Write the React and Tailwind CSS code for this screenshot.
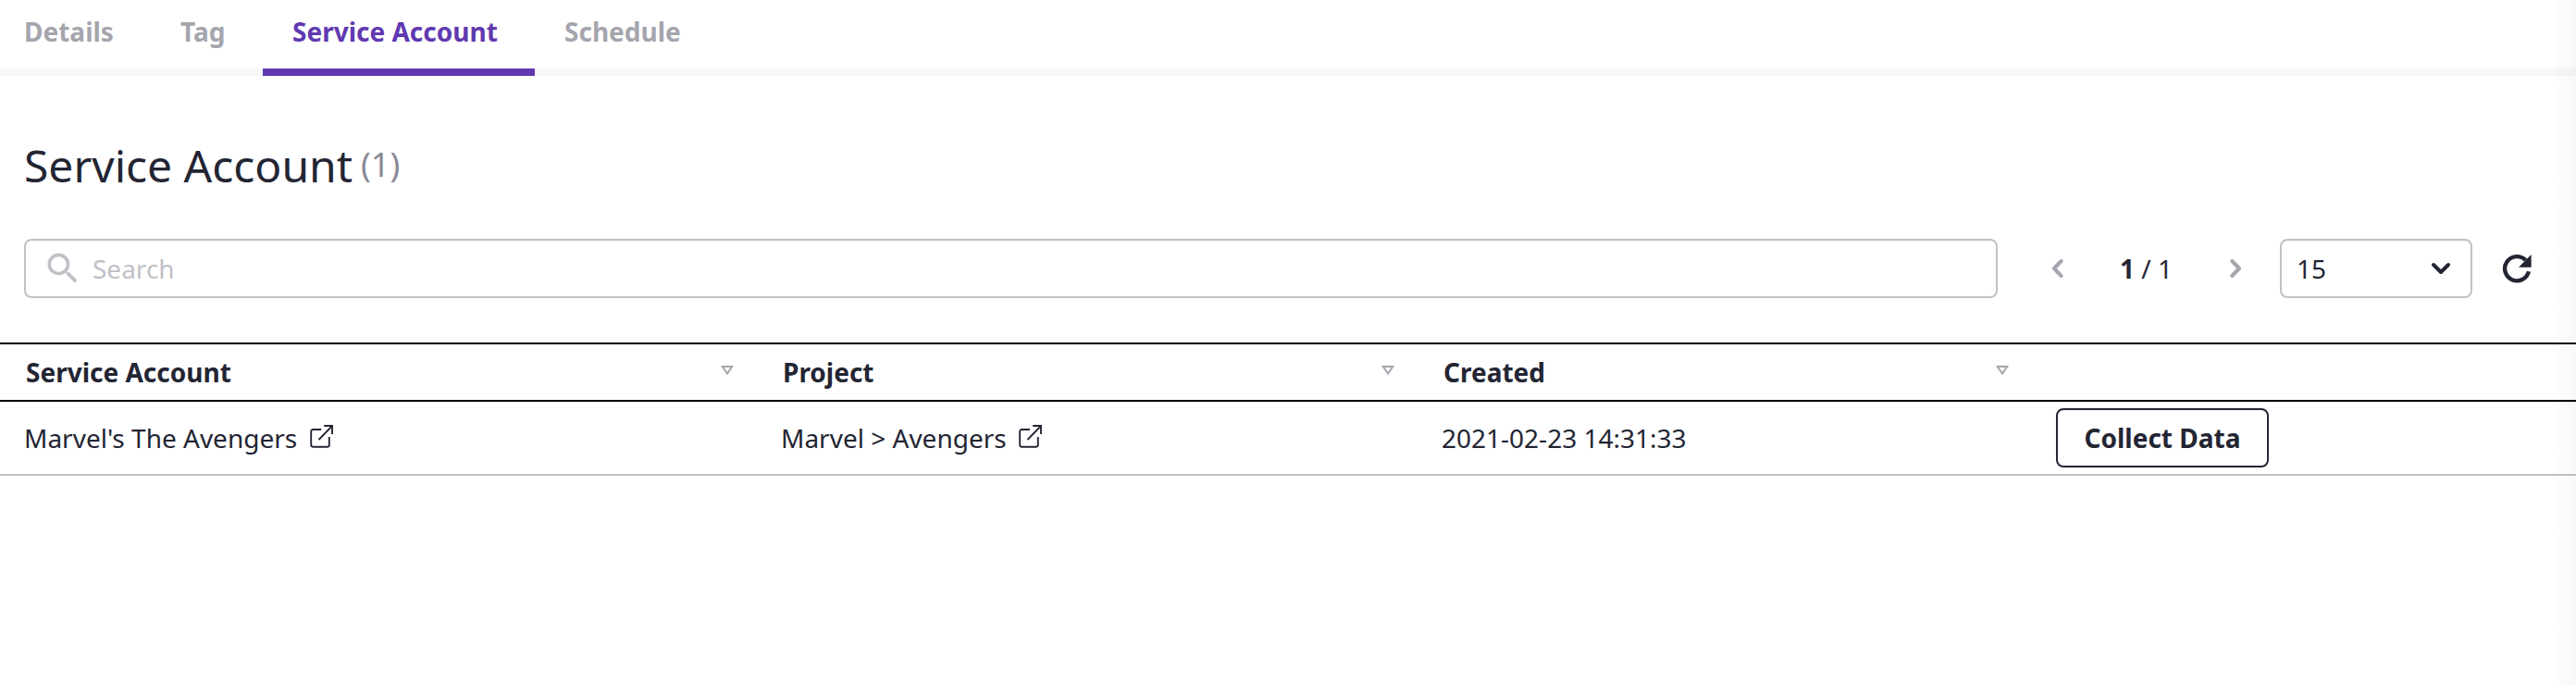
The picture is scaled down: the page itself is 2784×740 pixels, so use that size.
import React from "react";

const TABS = [
  { label: "Details", className: "w-[126px] pl-[26px]" },
  { label: "Tag", className: "w-[158px] pl-[69px]" },
  { label: "Service Account", className: "w-[294px] pl-[32px] text-[#6039b0]" },
  { label: "Schedule", className: "w-[190px] pl-[32px]" },
];

function Search() {
  return (
    <svg className="size-[44px]" viewBox="0 0 24 24" fill="#c1c1c7">
      <path d="M15.5 14h-.79l-.28-.27A6.47 6.47 0 0 0 16 9.5 6.5 6.5 0 1 0 9.5 16c1.61 0 3.09-.59 4.23-1.57l.27.28v.79l5 4.99L20.49 19l-4.99-5zm-6 0C7.01 14 5 11.99 5 9.5S7.01 5 9.5 5 14 7.01 14 9.5 11.99 14 9.5 14z" />
    </svg>
  );
}

function Chevron({ className, viewBox, d }) {
  return (
    <svg className={className} viewBox={viewBox} fill="none" stroke="currentColor" strokeWidth="4" strokeLinecap="round" strokeLinejoin="round">
      <path d={d} />
    </svg>
  );
}

function Refresh() {
  return (
    <svg className="ml-8 size-8" viewBox="0 0 32 32" fill="none" stroke="#232533" strokeWidth="4.4">
      <path d="M25.5 7A13.1 13.1 0 1 0 28.9 19.3" />
      <path d="M31.6 1v13.7H18z" fill="#232533" stroke="none" />
    </svg>
  );
}

function External({ className }) {
  return (
    <svg className={"mb-[3px] size-[25px] " + className} viewBox="0 0 25 25" fill="none" stroke="#232533" strokeWidth="1.9">
      <path d="M12 5H3.4Q1.2 5 1.2 7.2V21.6q0 2.2 2.2 2.2H18.6q2.2 0 2.2-2.2V13M9.5 16L24 1.2M15.2 1h8.8v9" />
    </svg>
  );
}

function Sort() {
  return (
    <svg className="mb-[3px] h-[11px] w-[14px]" viewBox="0 0 14 11" fill="none" stroke="#a5a5ad" strokeWidth="2">
      <path d="M1.7 1h10.6L7 8.6z" />
    </svg>
  );
}

function Head({ className, children }) {
  return (
    <div className={"flex items-center justify-between " + className}>
      <span>{children}</span>
      <Sort />
    </div>
  );
}

export default function App() {
  return (
    <div className="relative h-[740px] w-[2784px] overflow-hidden bg-white font-['Noto_Sans',sans-serif] text-[28px] leading-[40px] text-[#232533]">
      <nav className="flex h-[74px] font-bold text-[#a5a5ad]">
        {TABS.map(({ label, className }) => (
          <div key={label} className={"whitespace-nowrap pt-[14px] " + className}>{label}</div>
        ))}
      </nav>
      <div className="flex h-2 bg-[#f7f7f7] pl-[284px]">
        <div className="w-[294px] bg-[#6039b0]" />
      </div>
      <div className="flex h-[176px] items-start pl-[26px] pt-[63px]">
        <h1 className="text-[48px] leading-[68px]">Service Account</h1>
        <span className="ml-[9px] text-[36px] leading-[66px] text-[#898995]">(1)</span>
      </div>
      <div className="flex h-16 items-center pl-[26px]">
        <div className="flex h-16 w-[2133px] items-center rounded-lg border-2 border-[#c1c1c7] pl-[18px] text-[#c1c1c7]">
          <Search />
          <span className="ml-[10px]">Search</span>
        </div>
        <Chevron className="ml-[57px] h-6 w-[14px] text-[#a5a5ad]" viewBox="0 0 14 24" d="M11.6 4L4 12L11.6 20" />
        <span className="ml-[61px] w-[60px] whitespace-nowrap"><b>1</b> / 1</span>
        <Chevron className="ml-[57px] h-6 w-[14px] text-[#a5a5ad]" viewBox="0 0 14 24" d="M4.4 4L12 12L4.4 20" />
        <div className="ml-[42px] flex h-16 w-[208px] items-center justify-between rounded-lg border-2 border-[#c1c1c7] pl-4 pr-5">
          15
          <Chevron className="size-6" viewBox="0 0 24 24" d="M4 8L12 16L20 8" />
        </div>
        <Refresh />
      </div>
      <div className="mt-[48px] flex h-[64px] border-y-2 border-black font-bold">
        <Head className="w-[793px] pl-7">Service Account</Head>
        <Head className="w-[714px] pl-[53px]">Project</Head>
        <Head className="w-[664px] pl-[53px]">Created</Head>
      </div>
      <div className="flex h-[80px] items-center border-b-2 border-[#c1c1c7]">
        <div className="flex w-[818px] items-center pl-[26px]">Marvel's The Avengers<External className="ml-[14px]" /></div>
        <div className="flex w-[714px] items-center pl-[26px]">Marvel &gt; Avengers<External className="ml-[13px]" /></div>
        <div className="w-[690px] pl-[26px]">2021-02-23 14:31:33</div>
        <button className="h-16 w-[230px] rounded-lg border-2 border-[#232533] font-bold">Collect Data</button>
      </div>
      <div className="absolute inset-y-0 right-0 w-7 bg-linear-to-r from-black/0 to-black/3" />
    </div>
  );
}
